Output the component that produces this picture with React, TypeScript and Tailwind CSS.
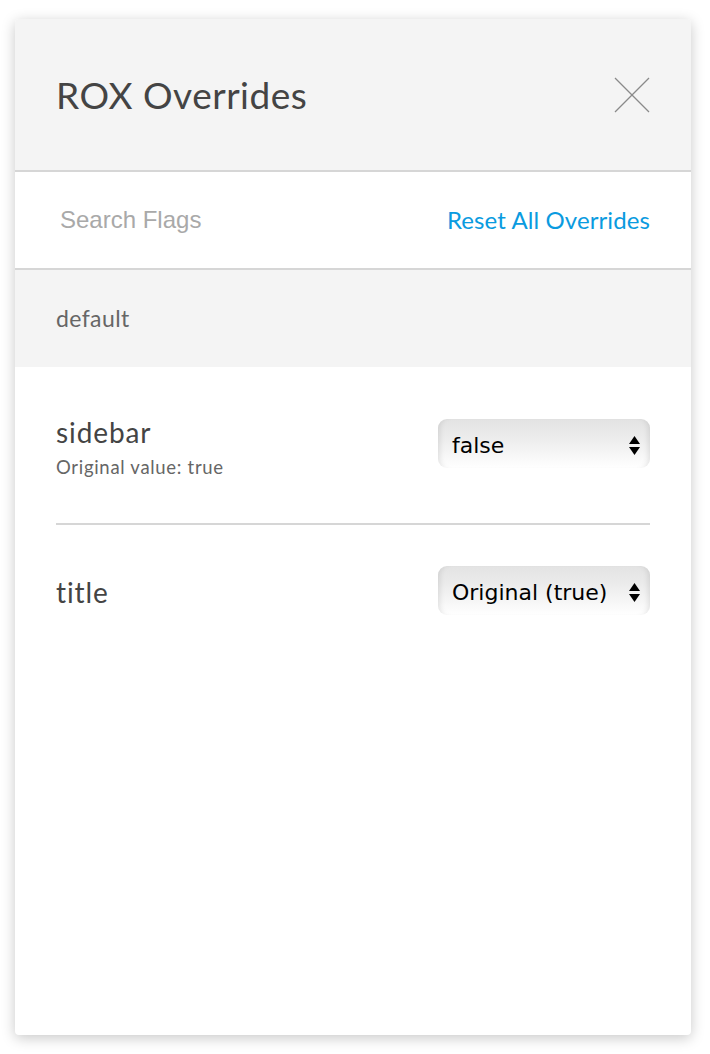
import React from "react";

function SelectBox({ label }: { label: string }) {
  return (
    <div className="relative w-[212px] h-[49px] shrink-0 rounded-[9px] bg-[linear-gradient(to_bottom,#e3e3e3_0%,#ebebeb_35%,#f7f7f7_75%,#ffffff_100%)] shadow-[inset_6px_0_6px_-5px_rgba(0,0,0,0.12),inset_-6px_0_6px_-5px_rgba(0,0,0,0.12)] flex items-center pl-[14px]">
      <span className="text-[22px] text-black leading-none mt-[4px]" style={{ fontFamily: '"DejaVu Sans", "Liberation Sans", sans-serif' }}>
        {label}
      </span>
      <svg className="absolute right-[10px] top-[17px]" width="11" height="19" viewBox="0 0 11 19">
        <polygon points="5.5,0 11,8 0,8" fill="#000" />
        <polygon points="0,11 11,11 5.5,19" fill="#000" />
      </svg>
    </div>
  );
}

export default function App() {
  return (
    <div className="min-h-[1054px] w-[710px] bg-white pt-[19px] pl-[15px]" style={{ fontFamily: 'Lato, "Open Sans", sans-serif' }}>
      <div className="w-[676px] h-[1016px] rounded-[4px] bg-white shadow-[0_3px_14px_rgba(0,0,0,0.22)] overflow-hidden flex flex-col">
        <div className="h-[151px] bg-[#f4f4f4] border-b-2 border-[#d6d6d6] flex items-center justify-between pl-[41px] pr-[41px] box-content">
          <h1 className="text-[37px] text-[#444] leading-none tracking-[0.5px]">ROX Overrides</h1>
          <svg width="36" height="36" viewBox="0 0 36 36">
            <line x1="1" y1="1" x2="35" y2="35" stroke="#8a8a8a" strokeWidth="1.2" />
            <line x1="35" y1="1" x2="1" y2="35" stroke="#8a8a8a" strokeWidth="1.2" />
          </svg>
        </div>
        <div className="h-[96px] border-b-2 border-[#d6d6d6] flex items-center justify-between pl-[45px] pr-[41px] box-content">
          <span className="text-[24px] text-[#a9a9a9] leading-none" style={{ fontFamily: '"Liberation Sans", Arial, sans-serif' }}>
            Search Flags
          </span>
          <span className="text-[24px] text-[#0a9be0] leading-none tracking-[0.1px]">Reset All Overrides</span>
        </div>
        <div className="h-[97px] bg-[#f4f4f4] flex items-center pl-[41px]">
          <span className="text-[23px] text-[#666] leading-none tracking-[0.4px]">default</span>
        </div>
        <div className="px-[41px]">
          <div className="h-[158px] flex items-start justify-between pt-[49px] border-b-2 border-[#d6d6d6]">
            <div className="flex flex-col">
              <span className="text-[28px] text-[#444] leading-[32px] tracking-[0.9px]">sidebar</span>
              <span className="text-[18.5px] text-[#666] leading-[22px] mt-[8px] tracking-[0.7px]">Original value: true</span>
            </div>
            <div className="mt-[3px]">
              <SelectBox label="false" />
            </div>
          </div>
          <div className="flex items-start justify-between pt-[41px]">
            <span className="text-[28px] text-[#444] leading-[32px] mt-[10px] tracking-[0.9px]">title</span>
            <SelectBox label="Original (true)" />
          </div>
        </div>
      </div>
    </div>
  );
}
